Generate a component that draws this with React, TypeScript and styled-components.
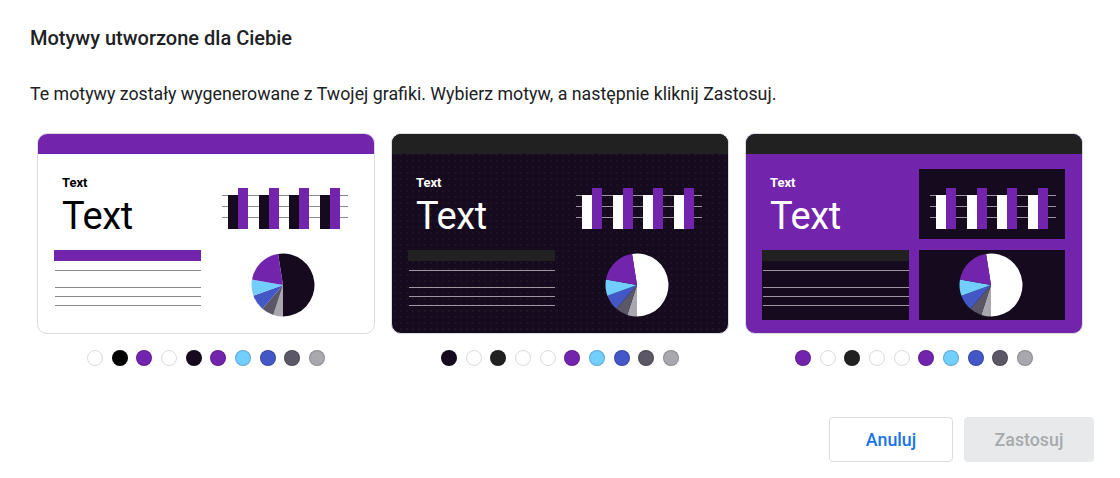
import styled, { createGlobalStyle } from "styled-components";

const PURPLE = "#7324ad";
const DARK = "#160b1e";
const CHARCOAL = "#212121";
const LIGHTBLUE = "#72cefd";
const BLUE = "#4457c6";
const GREY = "#5b5766";
const SILVER = "#a9a8ae";

type Theme = {
  bg: string;
  header: string;
  text: string;
  barA: string;
  pieMain: string;
  blockHead: string;
  line: string;
  panel: string;
  dotted: boolean;
  swatches: string[];
};

const themes: Theme[] = [
  {
    bg: "#ffffff",
    header: PURPLE,
    text: "#000000",
    barA: DARK,
    pieMain: DARK,
    blockHead: PURPLE,
    line: "#8a8a8a",
    panel: "transparent",
    dotted: false,
    swatches: ["#fff", "#000", PURPLE, "#fff", DARK, PURPLE, LIGHTBLUE, BLUE, GREY, SILVER],
  },
  {
    bg: DARK,
    header: CHARCOAL,
    text: "#ffffff",
    barA: "#ffffff",
    pieMain: "#ffffff",
    blockHead: CHARCOAL,
    line: "#9a97a0",
    panel: "transparent",
    dotted: true,
    swatches: [DARK, "#fff", CHARCOAL, "#fff", "#fff", PURPLE, LIGHTBLUE, BLUE, GREY, SILVER],
  },
  {
    bg: PURPLE,
    header: CHARCOAL,
    text: "#ffffff",
    barA: "#ffffff",
    pieMain: "#ffffff",
    blockHead: CHARCOAL,
    line: "#9a97a0",
    panel: DARK,
    dotted: false,
    swatches: [PURPLE, "#fff", CHARCOAL, "#fff", "#fff", PURPLE, LIGHTBLUE, BLUE, GREY, SILVER],
  },
];

const GlobalStyle = createGlobalStyle`
  body {
    margin: 0;
    background: #ffffff;
    font-family: Roboto, "Liberation Sans", Arial, sans-serif;
  }
`;

const Dialog = styled.div`
  width: 1120px;
  height: 478px;
  box-sizing: border-box;
  padding: 26px 26px 0 30px;
  display: flex;
  flex-direction: column;
`;

const Title = styled.h2`
  margin: 0;
  font-size: 20px;
  line-height: 24px;
  font-weight: 500;
  color: #202124;
`;

const Subtitle = styled.p`
  margin: 32px 0 0;
  font-size: 17.8px;
  line-height: 24px;
  font-weight: 400;
  color: #202124;
`;

const CardRow = styled.div`
  margin-top: 27px;
  padding-left: 7px;
  display: flex;
  gap: 16px;
`;

const Option = styled.div`
  display: flex;
  flex-direction: column;
  align-items: center;
  gap: 16px;
`;

const Card = styled.div<{ $bg: string; $dotted: boolean }>`
  width: 338px;
  height: 201px;
  box-sizing: border-box;
  border: 1px solid #dadce0;
  border-radius: 10px;
  overflow: hidden;
  background-color: ${(p) => p.$bg};
  background-image: ${(p) =>
    p.$dotted ? "radial-gradient(rgba(255,255,255,0.08) 0.6px, transparent 0.8px)" : "none"};
  background-size: 6px 6px;
  display: flex;
  flex-direction: column;
`;

const CardHeader = styled.div<{ $bg: string }>`
  height: 20px;
  background: ${(p) => p.$bg};
`;

const CardBody = styled.div`
  flex: 1;
  padding: 15px 17px 13px 16px;
  display: grid;
  grid-template-columns: 147px 146px;
  grid-template-rows: 70px 70px;
  column-gap: 10px;
  row-gap: 11px;
`;

const Panel = styled.div<{ $bg: string }>`
  background: ${(p) => p.$bg};
  overflow: hidden;
`;

const TextPanel = styled.div<{ $color: string }>`
  color: ${(p) => p.$color};
  padding: 5px 8px 0;
  display: flex;
  flex-direction: column;
`;

const SmallText = styled.span`
  font-size: 13px;
  line-height: 17px;
  font-weight: 700;
`;

const BigText = styled.span`
  margin-top: 3px;
  font-size: 38px;
  line-height: 44px;
  font-weight: 400;
  letter-spacing: -0.4px;
`;

const BlockHead = styled.div<{ $bg: string }>`
  height: 11px;
  background: ${(p) => p.$bg};
`;

const BlockLine = styled.div<{ $color: string; $top: number }>`
  height: 1px;
  margin-top: ${(p) => p.$top}px;
  margin-left: 1px;
  background: ${(p) => p.$color};
`;

const Swatches = styled.div`
  display: flex;
  gap: 8.7px;
`;

const Swatch = styled.span<{ $color: string }>`
  width: 16px;
  height: 16px;
  box-sizing: border-box;
  border-radius: 50%;
  background: ${(p) => p.$color};
  border: 1px solid ${(p) => (p.$color.toLowerCase() === "#fff" ? "#dadce0" : "rgba(0,0,0,0.18)")};
`;

const Footer = styled.div`
  margin-top: auto;
  margin-bottom: 16px;
  display: flex;
  justify-content: flex-end;
  gap: 11px;
`;

const Button = styled.button<{ $primary?: boolean }>`
  height: 45px;
  padding: 0 ${(p) => (p.$primary ? "24px" : "30px")};
  min-width: ${(p) => (p.$primary ? "130px" : "124px")};
  border-radius: 4px;
  font-family: Roboto, "Liberation Sans", Arial, sans-serif;
  font-size: 17.8px;
  font-weight: 500;
  cursor: pointer;
  border: 1px solid ${(p) => (p.$primary ? "#e6e7e8" : "#dadce0")};
  background: ${(p) => (p.$primary ? "#e8e9ea" : "#ffffff")};
  color: ${(p) => (p.$primary ? "#a7aaad" : "#1a73e8")};
`;

const point = (cx: number, cy: number, r: number, deg: number) => {
  const a = ((deg - 90) * Math.PI) / 180;
  return [cx + r * Math.cos(a), cy + r * Math.sin(a)];
};

const slice = (cx: number, cy: number, r: number, from: number, to: number) => {
  const [x1, y1] = point(cx, cy, r, from);
  const [x2, y2] = point(cx, cy, r, to);
  const large = to - from > 180 ? 1 : 0;
  return `M${cx} ${cy} L${x1} ${y1} A${r} ${r} 0 ${large} 1 ${x2} ${y2} Z`;
};

const BarChart = ({ theme }: { theme: Theme }) => {
  const xs = [17, 48, 78, 109];
  return (
    <svg width="146" height="70" viewBox="0 0 146 70">
      {[26, 37, 48].map((y) => (
        <rect key={y} x={11} y={y} width={126} height={1} fill={theme.line} />
      ))}
      {xs.map((x) => (
        <g key={x}>
          <rect x={x} y={26} width={10} height={34} fill={theme.barA} />
          <rect x={x + 10} y={19} width={10} height={41} fill={PURPLE} />
        </g>
      ))}
    </svg>
  );
};

const PieChart = ({ theme }: { theme: Theme }) => {
  const cx = 72;
  const cy = 35;
  const r = 31.5;
  const parts: [number, number, string][] = [
    [351, 540, theme.pieMain],
    [180, 198, SILVER],
    [198, 221, GREY],
    [221, 250, BLUE],
    [250, 280, LIGHTBLUE],
    [280, 351, PURPLE],
  ];
  return (
    <svg width="146" height="70" viewBox="0 0 146 70">
      {parts.map(([a, b, c]) => (
        <path key={a} d={slice(cx, cy, r, a, b)} fill={c} />
      ))}
    </svg>
  );
};

const ThemeCard = ({ theme }: { theme: Theme }) => (
  <Option>
    <Card $bg={theme.bg} $dotted={theme.dotted}>
      <CardHeader $bg={theme.header} />
      <CardBody>
        <TextPanel $color={theme.text}>
          <SmallText>Text</SmallText>
          <BigText>Text</BigText>
        </TextPanel>
        <Panel $bg={theme.panel}>
          <BarChart theme={theme} />
        </Panel>
        <Panel $bg={theme.panel}>
          <BlockHead $bg={theme.blockHead} />
          <BlockLine $color={theme.line} $top={9} />
          <BlockLine $color={theme.line} $top={16} />
          <BlockLine $color={theme.line} $top={8} />
          <BlockLine $color={theme.line} $top={8} />
        </Panel>
        <Panel $bg={theme.panel}>
          <PieChart theme={theme} />
        </Panel>
      </CardBody>
    </Card>
    <Swatches>
      {theme.swatches.map((c, i) => (
        <Swatch key={i} $color={c} />
      ))}
    </Swatches>
  </Option>
);

export default function App() {
  return (
    <>
      <GlobalStyle />
      <Dialog>
        <Title>Motywy utworzone dla Ciebie</Title>
        <Subtitle>
          Te motywy zostały wygenerowane z Twojej grafiki. Wybierz motyw, a następnie kliknij Zastosuj.
        </Subtitle>
        <CardRow>
          {themes.map((t, i) => (
            <ThemeCard key={i} theme={t} />
          ))}
        </CardRow>
        <Footer>
          <Button>Anuluj</Button>
          <Button $primary disabled>
            Zastosuj
          </Button>
        </Footer>
      </Dialog>
    </>
  );
}
